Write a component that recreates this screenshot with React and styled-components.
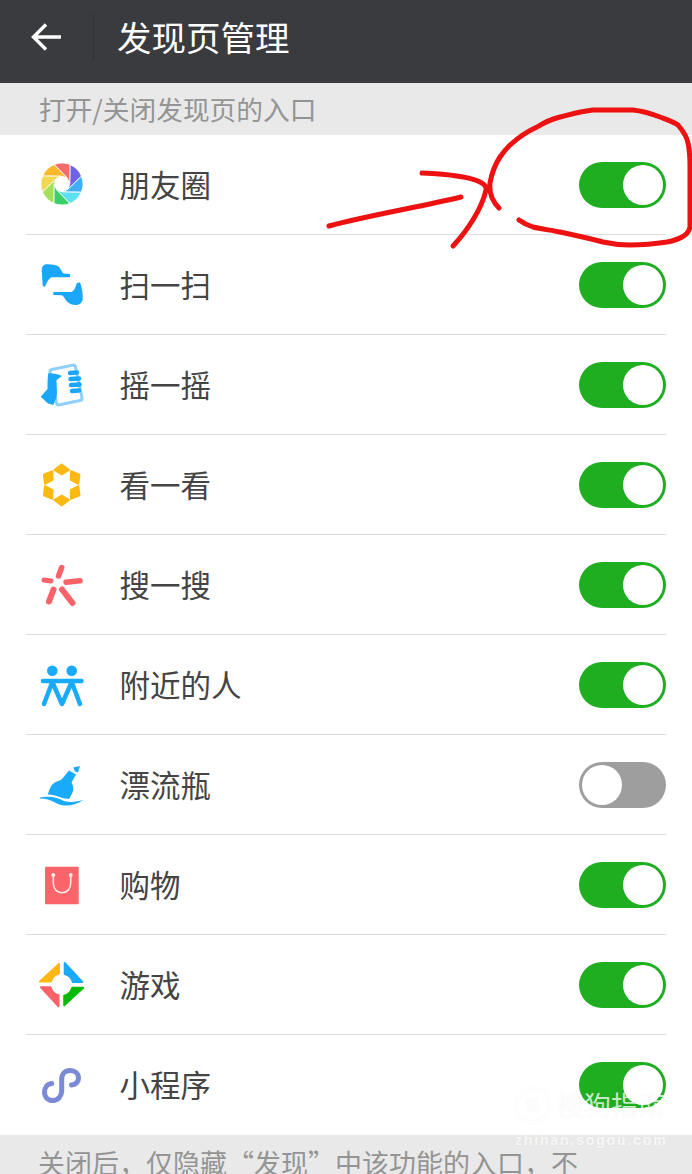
import React from "react";
import styled, { createGlobalStyle } from "styled-components";

const GlobalStyle = createGlobalStyle`
  html, body {
    margin: 0;
    padding: 0;
    background: #fff;
  }
  body {
    font-family: "Noto Sans CJK SC", "Noto Sans", sans-serif;
  }
`;

const Page = styled.div`
  position: relative;
  width: 692px;
  height: 1174px;
  overflow: hidden;
  background: #fff;
`;

const Header = styled.header`
  display: flex;
  align-items: center;
  height: 83px;
  padding-bottom: 9px;
  box-sizing: border-box;
  background: #3a3b3f;
`;

const BackButton = styled.div`
  display: flex;
  align-items: center;
  justify-content: center;
  width: 94px;
  height: 46px;
  border-right: 1px solid #303135;
  box-sizing: border-box;
`;

const Title = styled.h1`
  margin: 0 0 3px 23px;
  font-size: 34.5px;
  line-height: 46px;
  font-weight: 400;
  color: #fff;
`;

const Hint = styled.div`
  display: flex;
  align-items: center;
  height: 52px;
  padding: 0 0 2px 39px;
  box-sizing: border-box;
  background: #e9e9e9;
  color: #949494;
  font-size: 26.7px;
  white-space: nowrap;
`;

const List = styled.ul`
  list-style: none;
  margin: 0;
  padding: 0 26px;
  height: 1000px;
`;

const Row = styled.li`
  display: flex;
  align-items: center;
  height: 100px;
  padding-left: 12px;
  box-sizing: border-box;
  border-bottom: 1px solid #dcdcdc;
  &:last-child {
    border-bottom: none;
  }
`;

const IconBox = styled.div`
  width: 48px;
  height: 48px;
  flex: none;
  & svg {
    display: block;
  }
`;

const Label = styled.span`
  flex: 1;
  margin-left: 33.5px;
  padding-bottom: 2px;
  font-size: 30.5px;
  color: #444;
`;

const Toggle = styled.div`
  display: flex;
  align-items: center;
  justify-content: ${(p) => (p.$on ? "flex-end" : "flex-start")};
  width: 87px;
  height: 46px;
  padding: 0 3px;
  box-sizing: border-box;
  border-radius: 23px;
  background: ${(p) => (p.$on ? "#1eae20" : "#9e9e9e")};
`;

const Knob = styled.div`
  width: 40px;
  height: 40px;
  border-radius: 50%;
  background: #fff;
`;

const Footer = styled.div`
  height: 39px;
  padding: 8px 0 0 38px;
  box-sizing: border-box;
  background: #e9e9e9;
  color: #949494;
  font-size: 27px;
  line-height: 40px;
  white-space: nowrap;
`;

const Scribble = styled.svg`
  position: absolute;
  left: 0;
  top: 0;
  pointer-events: none;
`;

const Watermark = styled.div`
  position: absolute;
  left: 515px;
  top: 1087px;
  width: 160px;
  color: rgba(255, 255, 255, 0.75);
  text-shadow: 0 0 2px rgba(0, 0, 0, 0.05);
  pointer-events: none;
`;

const MarkTop = styled.div`
  display: flex;
  align-items: center;
  gap: 6px;
  height: 36px;
`;

const MarkBadge = styled.div`
  display: flex;
  align-items: center;
  justify-content: center;
  width: 36px;
  height: 36px;
  box-sizing: border-box;
  border: 2px solid rgba(255, 255, 255, 0.75);
  border-radius: 50%;
  box-shadow: 0 0 2px rgba(0, 0, 0, 0.06), inset 0 0 2px rgba(0, 0, 0, 0.06);
  font-size: 21px;
  font-weight: 700;
  font-family: "Liberation Sans", sans-serif;
`;

const MarkName = styled.div`
  font-size: 27px;
  line-height: 36px;
  white-space: nowrap;
`;

const MarkUrl = styled.div`
  margin-top: 9px;
  font-family: "Liberation Sans", sans-serif;
  font-size: 14px;
  font-weight: 700;
  line-height: 16px;
  letter-spacing: 1.85px;
  white-space: nowrap;
`;

const Svg = ({ children }) => (
  <svg width="48" height="48" viewBox="0 0 48 48">
    {children}
  </svg>
);

// aperture blades, clockwise from the red one on top
const bladeColors = ["#f56a6a", "#6f62e6", "#3fb0f5", "#5fe0f0", "#3fcf6a", "#a4e05a", "#f0d850", "#fdb92b"];
const polar = (deg, r) => {
  const t = ((deg - 90) * Math.PI) / 180;
  return `${(24 + r * Math.cos(t)).toFixed(2)} ${(23 + r * Math.sin(t)).toFixed(2)}`;
};
const bladePath = (i) => {
  const a = i * 45 - 22;
  return `M${polar(a, 21)} A21 21 0 0 1 ${polar(a + 45, 21)} L${polar(a + 105, 8)} L${polar(a + 60, 8)} Z`;
};

const MomentsIcon = () => (
  <Svg>
    {bladeColors.map((c, i) => (
      <path key={c} d={bladePath(i)} fill={c} stroke="#fff" strokeWidth="0.8" />
    ))}
  </Svg>
);

const ScanIcon = () => (
  <Svg>
    <path
      fill="#1aa7fa"
      d="M3.7 9 C4 5 6 3.3 9 3.3 C15 3.2 19 4 21 6 C23 8 24 12 26 12.5 L32 13 V16.3 H14 C11.5 16.3 9 21 7 25.7 L4.7 25 Z"
    />
    <path
      fill="#1aa7fa"
      d="M42 21.3 C44 27 45 33 44.7 38 C44.3 42 41 44 37 44 C33 44 29 41 27 38 C26 36 25 34.5 23.5 34.3 L15.3 34 V31 H33 C36 31 37.5 26 38.7 22.3 Z"
    />
  </Svg>
);

const ShakeIcon = () => (
  <Svg>
    <rect x="15" y="6" width="26" height="36" rx="2.5" transform="rotate(-12 28 24)" fill="#fff" stroke="#8fd0fb" strokeWidth="3" />
    <path fill="#1aa7fa" d="M2.7 35.7 L9.5 28 C9.5 23 9.5 17 10.3 12.3 C14 12 20 13 24 15 L18.5 19 C18.5 25 19.5 31 18.5 36 L15.3 44 L10 42.5 Z" />
    <g stroke="#1aa7fa" strokeWidth="4.5" strokeLinecap="round">
      <line x1="32" y1="12" x2="39" y2="11.5" />
      <line x1="32.5" y1="18" x2="41" y2="17.5" />
      <line x1="33" y1="24" x2="41.5" y2="23.5" />
      <line x1="34" y1="30" x2="41" y2="29.5" />
    </g>
  </Svg>
);

const LookIcon = () => (
  <Svg>
    {[0, 60, 120, 180, 240, 300].map((r) => (
      <path
        key={r}
        d="M23.7 3.5 L31 9 L23.7 13.5 L16.4 9 Z"
        fill="#fdb913"
        stroke="#fdb913"
        strokeWidth="2"
        strokeLinejoin="round"
        transform={`rotate(${r} 23.7 24)`}
      />
    ))}
  </Svg>
);

const SearchIcon = () => (
  <Svg>
    <g stroke="#f96268" strokeLinecap="round">
      <line x1="23.7" y1="6.5" x2="20.5" y2="15" strokeWidth="5.5" />
      <line x1="6" y1="19" x2="13" y2="20" strokeWidth="5" />
      <line x1="28" y1="21.3" x2="42" y2="19.7" strokeWidth="5.5" />
      <line x1="15.5" y1="28.5" x2="11" y2="40.5" strokeWidth="6" />
      <line x1="24" y1="28.5" x2="34.5" y2="42" strokeWidth="6" />
    </g>
  </Svg>
);

const NearbyIcon = () => (
  <Svg>
    <circle cx="14.3" cy="9.7" r="5.3" fill="#1aaafa" />
    <circle cx="33.7" cy="9.7" r="5.3" fill="#1aaafa" />
    <g stroke="#1aaafa" strokeWidth="4.5" strokeLinecap="round" strokeLinejoin="round" fill="none">
      <line x1="5" y1="20" x2="43.5" y2="20" />
      <path d="M14.3 21 L6 43 M14.3 21 L24 43 L33.7 21 L42 43" />
    </g>
  </Svg>
);

const BottleIcon = () => (
  <Svg>
    <path
      fill="#1aaafa"
      d="M9.5 35 C11 29 13 24 16 22 C19 20 22 20 24 18 L31 9.5 L38 13.5 L33.5 21.5 C34.5 24 35.8 26 35.3 29 C34.5 32 33 35 31 38 Z"
    />
    <path fill="#1aaafa" d="M35.3 6.5 L42 5 L40 11.5 L37 10.5 Z" />
    <path fill="#fff" d="M0 34.5 C12 32 20 35 27 38.5 C33 40 40 39 48 36 V38 C40 41 33 42 27 40.5 C20 37 12 35 0 36.5 Z" />
    <path fill="#1aaafa" d="M2 36.5 C12 34.5 20 37 26 40 C32 41.8 39 41 45.5 38.8 C40 43 33 45 26 44.5 C18 44 14 37.5 2 37.5 Z" />
  </Svg>
);

const ShopIcon = () => (
  <Svg>
    <rect x="7" y="5.7" width="33.7" height="37.6" rx="1" fill="#fb6468" />
    <path d="M15.3 14 V22 C15.3 28 19 31.7 24 31.7 C29 31.7 32.7 28 32.7 22 V14" fill="none" stroke="#ffe9e9" strokeWidth="1.6" />
    <circle cx="15.3" cy="14" r="2" fill="#ffe9e9" />
    <circle cx="32.7" cy="14" r="2" fill="#ffe9e9" />
  </Svg>
);

const gameColors = ["#fdb913", "#1aaafa", "#09bb07", "#f96268"];

const GameIcon = () => (
  <Svg>
    {gameColors.map((c, i) => (
      <path
        key={c}
        d="M21 3 L2 20.5 H13 A11 11 0 0 1 21 12.5 Z"
        fill={c}
        stroke={c}
        strokeWidth="2"
        strokeLinejoin="round"
        transform={`rotate(${i * 90} 23.6 23.6)`}
      />
    ))}
  </Svg>
);

const MiniIcon = () => (
  <Svg>
    <path
      d="M13.7 22.5 C9 23 6.5 27 6.5 31 C6.5 36 10 39.5 15 39.5 C20 39.5 23.7 35 23.7 30 V18 C23.7 13 27 9.5 32 9.5 C37 9.5 40.5 12.5 40.5 17 C40.5 21 37.5 23.5 33.5 24"
      fill="none"
      stroke="#7b8ad6"
      strokeWidth="5"
      strokeLinecap="round"
    />
  </Svg>
);

const entries = [
  { name: "朋友圈", Icon: MomentsIcon, on: true },
  { name: "扫一扫", Icon: ScanIcon, on: true },
  { name: "摇一摇", Icon: ShakeIcon, on: true },
  { name: "看一看", Icon: LookIcon, on: true },
  { name: "搜一搜", Icon: SearchIcon, on: true },
  { name: "附近的人", Icon: NearbyIcon, on: true },
  { name: "漂流瓶", Icon: BottleIcon, on: false },
  { name: "购物", Icon: ShopIcon, on: true },
  { name: "游戏", Icon: GameIcon, on: true },
  { name: "小程序", Icon: MiniIcon, on: true }
];

export default function App() {
  return (
    <Page>
      <GlobalStyle />
      <Header>
        <BackButton>
          <svg width="32" height="32" viewBox="0 0 32 32">
            <path d="M30 16 H3 M15 3.5 L2.5 16 L15 28.5" fill="none" stroke="#fff" strokeWidth="3.4" />
          </svg>
        </BackButton>
        <Title>发现页管理</Title>
      </Header>
      <Hint>打开/关闭发现页的入口</Hint>
      <List>
        {entries.map(({ name, Icon, on }) => (
          <Row key={name}>
            <IconBox>
              <Icon />
            </IconBox>
            <Label>{name}</Label>
            <Toggle $on={on}>
              <Knob />
            </Toggle>
          </Row>
        ))}
      </List>
      <Footer>关闭后，仅隐藏“发现”中该功能的入口，不</Footer>

      {/* red marker drawn over the screenshot */}
      <Scribble width="692" height="1174" viewBox="0 0 692 1174">
        <g fill="none" stroke="#ee1111" strokeWidth="5" strokeLinecap="round" strokeLinejoin="round">
          <path d="M329 226 C370 215 420 207 461 197" />
          <path d="M422 173 C445 174 470 177 480 182 C484 184 487 186 486 190 C482 208 468 230 453 246" />
          <path d="M499 208 C492 201 489 193 490 183 C492 172 496 163 500 157 C504 151 507 148 510 145 C520 136 528 131 537 127 C545 122 552 119 560 117 C572 114 582 111 593 110 L633 110 C643 111 652 114 660 117 C668 120 674 122 678 125 C683 131 687 137 688 143 C690 152 690 160 690 167 L690 227 C689 232 686 235 682 237 C677 240 672 241 667 242 C654 244 642 245 630 245 C620 245 612 244 603 242 C588 238 574 235 560 232 C550 230 541 229 533 227 C527 225 523 223 519 220" />
        </g>
      </Scribble>

      <Watermark>
        <MarkTop>
          <MarkBadge>S</MarkBadge>
          <MarkName>搜狗指南</MarkName>
        </MarkTop>
        <MarkUrl>zhinan.sogou.com</MarkUrl>
      </Watermark>
    </Page>
  );
}
